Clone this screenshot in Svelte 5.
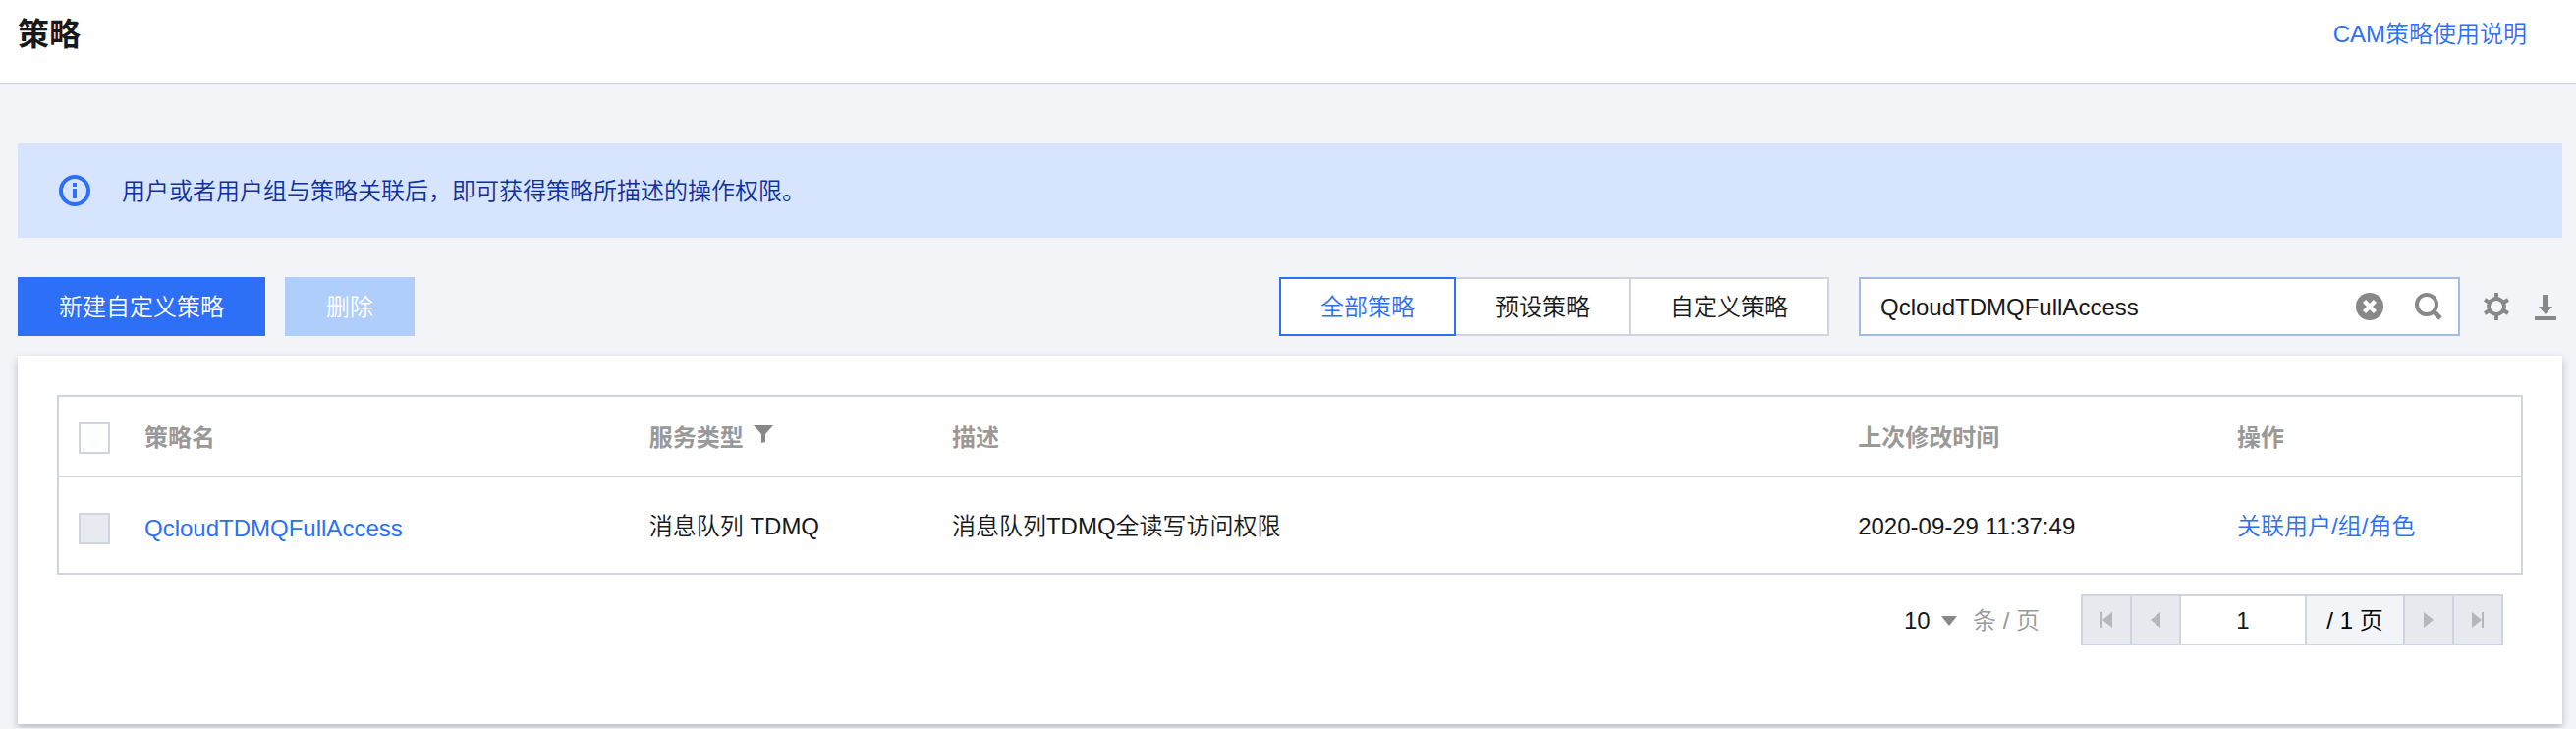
<script>
  let keyword = 'QcloudTDMQFullAccess';
  let page = 1;
  let pageSize = 10;
  let activeTab = 'all';

  const tabs = [
    { id: 'all', label: '全部策略' },
    { id: 'preset', label: '预设策略' },
    { id: 'custom', label: '自定义策略' }
  ];

  const policies = [
    {
      name: 'QcloudTDMQFullAccess',
      service: '消息队列 TDMQ',
      description: '消息队列TDMQ全读写访问权限',
      modified: '2020-09-29 11:37:49'
    }
  ];
</script>

<header class="page-header">
  <h1>策略</h1>
  <a href="#help">CAM策略使用说明</a>
</header>

<main class="content">
  <div class="alert" role="note">
    <svg width="32" height="32" viewBox="0 0 32 32" fill="none">
      <circle cx="16" cy="16" r="14" stroke="#2d6ff7" stroke-width="4"/>
      <path d="M14 8h4v4h-4zM14 14h4v10h-4z" fill="#2d6ff7"/>
    </svg>
    <span>用户或者用户组与策略关联后，即可获得策略所描述的操作权限。</span>
  </div>

  <div class="toolbar">
    <button class="btn primary">新建自定义策略</button>
    <button class="btn" disabled>删除</button>

    <div class="segment">
      {#each tabs as tab}
        <button class:active={activeTab === tab.id} on:click={() => (activeTab = tab.id)}>{tab.label}</button>
      {/each}
    </div>

    <div class="search">
      <input type="text" aria-label="搜索策略" bind:value={keyword} />
      <button class="icon-btn" aria-label="清空" on:click={() => (keyword = '')}>
        <svg width="28" height="28" viewBox="0 0 28 28">
          <circle cx="14" cy="14" r="14" fill="#888"/>
          <path d="M8.500 8.500l11 11M19.500 8.500l-11 11" stroke="#fff" stroke-width="4.500"/>
        </svg>
      </button>
      <button class="icon-btn" aria-label="搜索">
        <svg width="28" height="28" viewBox="0 0 28 28" fill="none" stroke="#888" stroke-width="4">
          <circle cx="12" cy="12" r="10"/>
          <path d="M19 19l7 7" stroke-width="5"/>
        </svg>
      </button>
    </div>

    <div class="tools">
      <button class="icon-btn" aria-label="设置">
        <svg width="26" height="28" viewBox="0 0 26 28" fill="none" stroke="#888" stroke-width="4">
          <circle cx="13" cy="14" r="8"/>
          <path d="M13 0v5M13 23v5M1 7l5 3M20 18l5 3M25 7l-5 3M6 18l-5 3"/>
        </svg>
      </button>
      <button class="icon-btn" aria-label="下载">
        <svg width="22" height="28" viewBox="0 0 22 28" fill="#888">
          <path d="M8 2h6v12h4l-7 8-7-8h4zM0 24h22v4H0z"/>
        </svg>
      </button>
    </div>
  </div>

  <section class="card">
    <table>
      <colgroup>
        <col class="col-check" />
        <col class="col-name" />
        <col class="col-service" />
        <col class="col-desc" />
        <col class="col-time" />
        <col />
      </colgroup>
      <thead>
        <tr>
          <th class="check"><input type="checkbox" aria-label="全选" /></th>
          <th>策略名</th>
          <th>
            <span class="filter">
              服务类型
              <svg width="20" height="18" viewBox="0 0 20 18" fill="#888">
                <path d="M0 0h20l-8 9v8l-4 1V9z"/>
              </svg>
            </span>
          </th>
          <th>描述</th>
          <th>上次修改时间</th>
          <th>操作</th>
        </tr>
      </thead>
      <tbody>
        {#each policies as policy}
          <tr>
            <td class="check"><input type="checkbox" aria-label={policy.name} disabled /></td>
            <td class="name"><a href="#detail">{policy.name}</a></td>
            <td>{policy.service}</td>
            <td>{policy.description}</td>
            <td>{policy.modified}</td>
            <td><a href="#attach">关联用户/组/角色</a></td>
          </tr>
        {/each}
      </tbody>
    </table>

    <div class="paging">
      <label class="page-size">
        <select bind:value={pageSize}>
          <option value={10}>10</option>
          <option value={20}>20</option>
          <option value={50}>50</option>
        </select>
        <svg width="16" height="10" viewBox="0 0 16 10" fill="#888"><path d="M0 0h16l-8 10z"/></svg>
        <span>条 / 页</span>
      </label>

      <div class="pager">
        <button disabled aria-label="首页">
          <svg width="12" height="16" viewBox="0 0 12 16"><path d="M0 0h2v16H0zM12 0v16L2 8z"/></svg>
        </button>
        <button disabled aria-label="上一页">
          <svg width="10" height="16" viewBox="0 0 10 16"><path d="M10 0v16L0 8z"/></svg>
        </button>
        <input type="text" aria-label="页码" bind:value={page} />
        <span class="total">/ 1 页</span>
        <button disabled aria-label="下一页">
          <svg width="10" height="16" viewBox="0 0 10 16"><path d="M0 0v16l10-8z"/></svg>
        </button>
        <button disabled aria-label="末页">
          <svg width="12" height="16" viewBox="0 0 12 16"><path d="M10 0h2v16h-2zM0 0v16l10-8z"/></svg>
        </button>
      </div>
    </div>
  </section>
</main>

<style>
  :global(body) {
    background: #f2f4f8;
    color: #16181a;
    font: 350 24px/36px "Liberation Sans", "Noto Sans CJK SC", sans-serif;
  }

  button,
  input,
  select {
    box-sizing: border-box;
    margin: 0;
    padding: 0;
    border: none;
    border-radius: 0;
    background: none;
    color: inherit;
    font: inherit;
    outline: none;
  }

  svg {
    display: block;
    flex: none;
  }

  a {
    color: #2d6ff7;
    text-decoration: none;
  }

  .page-header {
    display: flex;
    justify-content: space-between;
    align-items: center;
    height: 70px;
    padding: 0 50px 14px 18px;
    background: #fff;
    border-bottom: 2px solid #cfd4de;
  }

  h1 {
    margin: 0;
    font-size: 32px;
    line-height: 48px;
  }

  .content {
    padding: 60px 14px 4px 18px;
  }

  .alert {
    box-sizing: border-box;
    display: flex;
    align-items: center;
    gap: 32px;
    height: 96px;
    padding: 0 42px;
    background: #d6e5fd;
    color: #0f2f9c;
  }

  .alert span {
    padding-top: 2px;
  }

  .toolbar {
    display: flex;
    align-items: center;
    gap: 20px;
    margin: 40px 0 20px;
  }

  .btn {
    height: 60px;
    padding: 2px 42px 0;
    background: #2d6ff7;
    color: #fff;
  }

  .btn:disabled {
    background: #b0cefc;
  }

  .segment {
    display: flex;
    margin-left: auto;
  }

  .segment button {
    height: 60px;
    padding: 2px 40px 0;
    border: 2px solid #cfd4de;
    background: #fff;
  }

  .segment button + button {
    margin-left: -2px;
  }

  .segment .active {
    z-index: 1;
    border-color: #2d6ff7;
    color: #2d6ff7;
  }

  .search {
    box-sizing: border-box;
    display: flex;
    align-items: center;
    gap: 32px;
    width: 612px;
    height: 60px;
    margin-left: 10px;
    padding: 0 16px 0 20px;
    border: 2px solid #a4bbe2;
    background: #fff;
  }

  .search input {
    flex: 1;
    min-width: 0;
    padding-top: 2px;
  }

  .tools {
    display: flex;
    gap: 26px;
    padding: 0 6px 0 4px;
  }

  .card {
    padding: 40px 40px 80px;
    background: #fff;
    box-shadow: 0 4px 8px rgba(54, 58, 80, 0.3);
  }

  table {
    width: 100%;
    table-layout: fixed;
    border-collapse: separate;
    border-spacing: 0;
    border: 2px solid #cfd4de;
  }

  .col-check {
    width: 67px;
  }

  .col-name {
    width: 20.5%;
  }

  .col-service {
    width: 12.3%;
  }

  .col-desc {
    width: 36.8%;
  }

  .col-time {
    width: 15.4%;
  }

  th,
  td {
    box-sizing: border-box;
    padding: 2px 20px 0;
    text-align: left;
    vertical-align: middle;
  }

  th {
    height: 82px;
    padding-top: 4px;
    border-bottom: 2px solid #cfd4de;
    color: #999;
  }

  td {
    height: 97px;
  }

  td.check,
  td.name {
    padding-top: 6px;
  }

  .check {
    padding-right: 0;
  }

  .check input {
    display: block;
    width: 32px;
    height: 32px;
    appearance: none;
    border: 2px solid #cfd4de;
  }

  .check input:disabled {
    background: #e7eaef;
  }

  .filter {
    display: flex;
    gap: 10px;
    align-items: center;
  }

  .filter svg {
    margin-bottom: 8px;
  }

  .paging {
    display: flex;
    justify-content: flex-end;
    align-items: center;
    gap: 42px;
    margin-top: 20px;
    padding-right: 20px;
  }

  .page-size {
    display: flex;
    align-items: center;
    padding-top: 2px;
    color: #999;
  }

  .page-size select {
    width: 38px;
    appearance: none;
    color: #16181a;
  }

  .page-size span {
    margin-left: 16px;
  }

  .pager {
    display: flex;
    height: 52px;
    box-sizing: border-box;
    border: 2px solid #cfd4de;
    background: #f2f4f8;
  }

  .pager > * + * {
    border-left: 2px solid #cfd4de;
  }

  .pager button {
    display: flex;
    justify-content: center;
    align-items: center;
    width: 50px;
    background: #e7e9ee;
  }

  .pager button:first-child {
    width: 48px;
  }

  .pager svg {
    fill: #b4b6ba;
  }

  .pager input {
    width: 128px;
    padding-top: 2px;
    background: #fff;
    text-align: center;
  }

  .total {
    box-sizing: border-box;
    width: 100px;
    padding-top: 2px;
    color: #000;
    line-height: 46px;
    text-align: center;
  }
</style>
